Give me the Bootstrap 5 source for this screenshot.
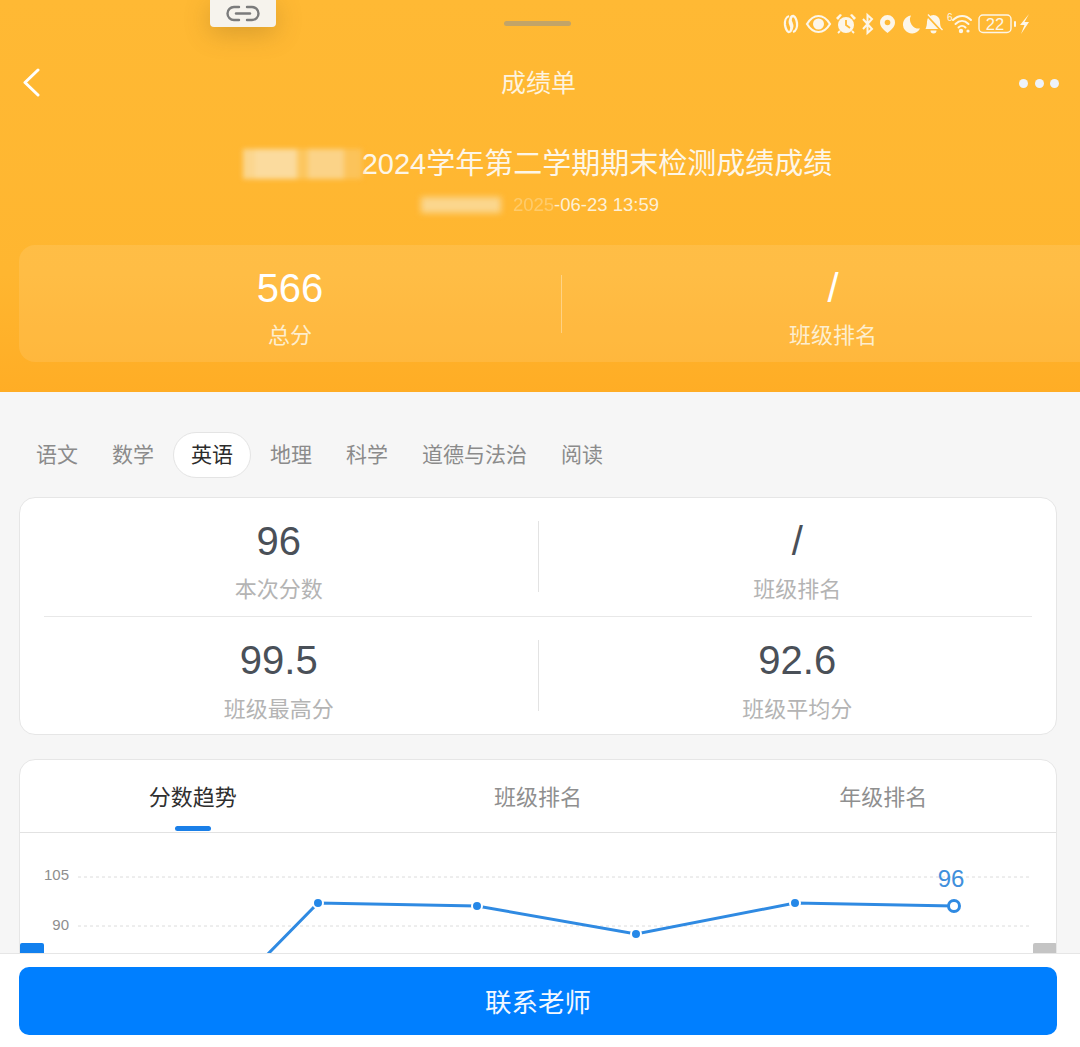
<!DOCTYPE html>
<html lang="zh-CN">
<head>
  <meta charset="UTF-8">
  <title>成绩单</title>
  <link href="https://cdn.jsdelivr.net/npm/bootstrap@5.3.0/dist/css/bootstrap.min.css" rel="stylesheet">
  <style>
    html, body {
      height: 100%;
    }
    body {
      font-family: "Liberation Sans", "Noto Sans CJK SC", sans-serif;
      background-color: #f6f6f6;
      overflow: hidden;
    }
    .page-top {
      position: relative;
      height: 392px;
      flex: none;
      overflow: hidden;
      color: #fff;
      background: linear-gradient(180deg, #ffb934 0%, #ffb630 70%, #ffad25 100%);
    }
    .copy-chip {
      position: absolute;
      left: 210px;
      top: 0;
      width: 66px;
      height: 27px;
      background: #f6f3ed;
      border-radius: 0 0 4px 4px;
      box-shadow: 0 6px 26px rgba(120, 90, 30, .3);
    }
    .drag-handle {
      position: absolute;
      left: 504px;
      top: 21px;
      width: 67px;
      height: 5px;
      border-radius: 3px;
      background: #c2a468;
    }
    .status-icons {
      position: absolute;
      left: 780px;
      top: 10px;
    }
    .top-nav {
      margin-top: 60px;
      height: 46px;
      padding: 0 22px;
    }
    .top-nav-side {
      flex: 1 1 0;
    }
    .top-nav-title {
      margin-right: 4px;
      font-size: 25px;
      line-height: 46px;
      color: #fdf3df;
    }
    .more-dots {
      gap: 6.5px;
      margin-right: -1px;
    }
    .more-dot {
      width: 9px;
      height: 9px;
      border-radius: 50%;
      background: #eef3fa;
    }
    .exam-title {
      margin-top: 38px;
      padding-right: 5px;
      font-size: 29px;
      line-height: 40px;
      color: #fdf6e8;
    }
    .exam-time {
      margin-top: 6px;
      font-size: 18.5px;
      line-height: 30px;
      color: #fdf0d6;
    }
    .blur-a {
      width: 119px;
      height: 30px;
      background: linear-gradient(90deg, #fbd68e 0 10%, #fbdb9e 10% 45%, #fcc65f 45% 55%, #fbd388 55% 85%, #fcc35a 85% 100%);
      filter: blur(2.5px);
    }
    .blur-b {
      width: 80px;
      height: 16px;
      margin-right: 12px;
      background: #fbd68e;
      filter: blur(3px);
    }
    .year-faded {
      opacity: .35;
    }
    .total-box {
      margin: 25px 0 0 19px;
      width: 1085px;
      height: 117px;
      background: rgba(255, 255, 255, .1);
      border-radius: 16px;
    }
    .total-sep {
      width: 1px;
      height: 58px;
      margin-top: 30px;
      background: rgba(255, 255, 255, .35);
    }
    .total-num {
      margin-top: 19px;
      font-size: 40px;
      line-height: 48px;
    }
    .total-label {
      margin-top: 9px;
      font-size: 22px;
      line-height: 30px;
      color: #fdeecf;
    }
    .page-body {
      min-height: 0;
      overflow: hidden;
      padding: 40px 23px 0 19px;
    }
    .subject-tab {
      padding: 0 16px;
      font-size: 21px;
      line-height: 44px;
      color: #8b8b8b;
      border: 1px solid transparent;
      border-radius: 23px;
    }
    .subject-tab.active {
      margin: 0 2px;
      padding: 0 17px;
      color: #2b2b2b;
      background: #fff;
      border-color: #e4e4e4;
    }
    .white-card {
      border: 1px solid #e6e6e6;
      border-radius: 16px;
      background: #fff;
    }
    .score-card {
      margin-top: 19px;
      height: 238px;
    }
    .score-row {
      height: 118px;
    }
    .score-row-top {
      height: 118px;
    }
    .score-line {
      height: 1px;
      margin: 0 24px;
      background: #e8e8e8;
    }
    .score-cell {
      flex: 1 1 0;
      text-align: center;
    }
    .score-sep {
      flex: none;
      width: 1px;
      height: 71px;
      margin-top: 23px;
      background: #e3e3e3;
    }
    .score-num {
      margin-top: 19px;
      font-size: 40px;
      line-height: 48px;
      color: #4a5058;
    }
    .score-label {
      margin-top: 10px;
      font-size: 22px;
      line-height: 30px;
      color: #b4b4b4;
    }
    .score-row .score-label {
      margin-top: 11px;
    }
    .chart-card {
      margin-top: 24px;
      height: 320px;
      overflow: hidden;
    }
    .chart-tabs {
      border-bottom: 1px solid #e2e2e2;
      height: 73px;
    }
    .chart-tab {
      flex: 1 1 0;
      padding-top: 23px;
      font-size: 22px;
      line-height: 30px;
      text-align: center;
      color: #8f8f8f;
    }
    .chart-tab.active {
      color: #2f2f2f;
    }
    .tab-bar {
      display: block;
      width: 36px;
      height: 5px;
      margin: 13px auto 0;
      border-radius: 3px;
      background: #1a7fe8;
    }
    .trend-svg {
      display: block;
    }
    .axis-text {
      font-family: "Liberation Sans", sans-serif;
      font-size: 15px;
      fill: #8e8e8e;
    }
    .last-text {
      font-family: "Liberation Sans", sans-serif;
      font-size: 24px;
      fill: #3f8fdc;
    }
    .page-foot {
      flex: none;
      height: 94px;
      padding: 13px 23px 0 19px;
      background: #fff;
      border-top: 1px solid #e6e6e6;
    }
    .contact-btn {
      height: 68px;
      font-size: 26.5px;
      line-height: 63px;
      padding: 5px 0 0;
      color: #f3f8ff;
      background: #007fff;
      border: 0;
      border-radius: 10px;
    }
  </style>
</head>
<body class="d-flex flex-column">

<header class="page-top">
  <div class="copy-chip d-flex align-items-center justify-content-center">
    <svg width="36" height="17" viewBox="0 0 36 17" fill="none" stroke="#7b7b7b" stroke-width="2.4" stroke-linecap="round">
      <path d="M14 2H9a6.5 6.5 0 0 0 0 13h5"/>
      <path d="M22 2h5a6.5 6.5 0 0 1 0 13h-5"/>
      <path d="M11 8.5h14"/>
    </svg>
  </div>
  <div class="drag-handle"></div>

  <svg class="status-icons" width="256" height="28" viewBox="780 10 256 28" fill="#fdf6e8" stroke="none">
    <!-- nfc loop -->
    <g fill="none" stroke="#fdf6e8" stroke-width="2.3">
      <path d="M789 16c-3 1-4.500 5-4 9 .5 3 1.500 6 3.500 7 2 0 3-2 3-4l-1-3c-1-2-1-5 1-7"/>
      <path d="M793 32c3-1 4.500-5 4-9-.5-3-1.500-6-3.500-7-2 0-3 2-3 4l1 3c1 2 1 5-1 7"/>
    </g>
    <!-- eye -->
    <path d="M807 24c3-5 6.500-8 11.500-8s8.500 3 11.500 8c-3 5-6.500 8-11.500 8s-8.500-3-11.500-8z" fill="none" stroke="#fdf6e8" stroke-width="2.2"/>
    <circle cx="818.500" cy="24" r="5.500"/>
    <!-- alarm -->
    <circle cx="846" cy="25" r="8"/>
    <path d="M838 20l4-5-2-1-4 4zM854 20l-4-5 2-1 4 4z"/>
    <path d="M846 20v5l4 3" fill="none" stroke="#ffb934" stroke-width="1.800"/>
    <path d="M840 31l-2 2M852 31l2 2" fill="none" stroke="#fdf6e8" stroke-width="1.800"/>
    <!-- bluetooth -->
    <path d="M863 19l9 10-4.500 4V15l4.500 4-9 10" fill="none" stroke="#fdf6e8" stroke-width="2"/>
    <!-- location -->
    <path d="M887.500 15a7.500 7.500 0 0 0-7.500 7.500c0 4.500 4.500 8 7.500 10.500 3-2.500 7.500-6 7.500-10.500a7.500 7.500 0 0 0-7.500-7.500z"/>
    <circle cx="887.500" cy="22.500" r="2.800" fill="#ffb934"/>
    <!-- moon -->
    <path d="M911 15.500a9 9 0 1 0 9 13 9 9 0 0 1-9-13z"/>
    <!-- bell off -->
    <path d="M933.500 15a6.500 6.500 0 0 0-6.500 6.500c0 3-.5 5-1.500 7.500h16c-1-2.500-1.500-4.500-1.500-7.500a6.500 6.500 0 0 0-6.500-6.500z"/>
    <path d="M930.500 30.500h6a3 3 0 0 1-6 0z"/>
    <path d="M927 15.500l15 16" fill="none" stroke="#ffb934" stroke-width="2"/>
    <path d="M928 14.500l14.500 15.500" fill="none" stroke="#fdf6e8" stroke-width="1.300"/>
    <!-- wifi -->
    <g fill="none" stroke="#fdf6e8" stroke-width="2" stroke-linecap="round">
      <path d="M953 20c5.500-5.500 13-5.500 18 0"/>
      <path d="M955.500 24c4-4 9-4 13 0"/>
      <path d="M958.500 27.500c2-2 5-2 7 0"/>
    </g>
    <circle cx="961" cy="31" r="2.200"/>
    <circle cx="968" cy="31" r="1.600"/>
    <text x="947" y="21" font-size="10" font-family="Liberation Sans">6</text>
    <!-- battery -->
    <rect x="979" y="15" width="32" height="17.500" rx="4" fill="none" stroke="#fdf6e8" stroke-width="1.400"/>
    <text x="995" y="29.500" font-size="16.500" font-family="Liberation Sans" text-anchor="middle">22</text>
    <rect x="1014" y="21" width="2" height="6" rx="1"/>
    <path d="M1029 14l-9 11h4.500l-3.500 9 8-12h-4.500z"/>
  </svg>

  <div class="top-nav d-flex align-items-center">
    <div class="top-nav-side">
      <svg class="d-block" width="18" height="30" viewBox="0 0 18 30" fill="none" stroke="#fff" stroke-width="3" stroke-linecap="round" stroke-linejoin="round">
        <path d="M16 2L3 14.500 16 27"/>
      </svg>
    </div>
    <div class="top-nav-title">成绩单</div>
    <div class="top-nav-side d-flex justify-content-end more-dots">
      <span class="more-dot"></span><span class="more-dot"></span><span class="more-dot"></span>
    </div>
  </div>

  <div class="exam-title d-flex justify-content-center align-items-center">
    <span class="blur-a"></span><span>2024学年第二学期期末检测成绩成绩</span>
  </div>
  <div class="exam-time d-flex justify-content-center align-items-center">
    <span class="blur-b"></span><span><span class="year-faded">2025</span>-06-23 13:59</span>
  </div>

  <div class="total-box d-flex">
    <div class="flex-fill w-50 text-center">
      <div class="total-num">566</div>
      <div class="total-label">总分</div>
    </div>
    <div class="total-sep flex-shrink-0"></div>
    <div class="flex-fill w-50 text-center">
      <div class="total-num">/</div>
      <div class="total-label">班级排名</div>
    </div>
  </div>
</header>

<main class="page-body flex-grow-1">
  <div class="d-flex">
    <div class="subject-tab">语文</div>
    <div class="subject-tab">数学</div>
    <div class="subject-tab active">英语</div>
    <div class="subject-tab">地理</div>
    <div class="subject-tab">科学</div>
    <div class="subject-tab">道德与法治</div>
    <div class="subject-tab">阅读</div>
  </div>

  <section class="white-card score-card">
    <div class="score-row-top d-flex">
      <div class="score-cell">
        <div class="score-num">96</div>
        <div class="score-label">本次分数</div>
      </div>
      <div class="score-sep"></div>
      <div class="score-cell">
        <div class="score-num">/</div>
        <div class="score-label">班级排名</div>
      </div>
    </div>
    <div class="score-line"></div>
    <div class="score-row d-flex">
      <div class="score-cell">
        <div class="score-num">99.5</div>
        <div class="score-label">班级最高分</div>
      </div>
      <div class="score-sep"></div>
      <div class="score-cell">
        <div class="score-num">92.6</div>
        <div class="score-label">班级平均分</div>
      </div>
    </div>
  </section>

  <section class="white-card chart-card">
    <div class="chart-tabs d-flex">
      <div class="chart-tab active">分数趋势<span class="tab-bar"></span></div>
      <div class="chart-tab">班级排名</div>
      <div class="chart-tab">年级排名</div>
    </div>
    <svg class="trend-svg" width="1036" height="120" viewBox="20 833 1036 120">
      <g stroke="#dcdcdc" stroke-width="1" stroke-dasharray="3 3">
        <path d="M78 877H1032"/>
        <path d="M78 926H1032"/>
      </g>
      <text class="axis-text" x="69" y="880" text-anchor="end">105</text>
      <text class="axis-text" x="69" y="930" text-anchor="end">90</text>
      <rect x="20" y="943" width="24" height="12" rx="2" fill="#1280ee"/>
      <rect x="1033" y="943" width="24" height="12" rx="2" fill="#c4c4c4"/>
      <path d="M264 958L318 903L477 906L636 934L795 903L954 906" fill="none" stroke="#2f8ae2" stroke-width="3"/>
      <g fill="#2588e8" stroke="#fff" stroke-width="2">
        <circle cx="318" cy="903" r="5"/>
        <circle cx="477" cy="906" r="5"/>
        <circle cx="636" cy="934" r="5"/>
        <circle cx="795" cy="903" r="5"/>
      </g>
      <circle cx="954" cy="906" r="5.500" fill="#fff" stroke="#2f8ae2" stroke-width="3"/>
      <text class="last-text" x="951" y="887" text-anchor="middle">96</text>
    </svg>
  </section>
</main>

<footer class="page-foot">
  <button type="button" class="btn btn-primary w-100 contact-btn">联系老师</button>
</footer>

<script src="https://cdn.jsdelivr.net/npm/bootstrap@5.3.0/dist/js/bootstrap.bundle.min.js"></script>
</body>
</html>
